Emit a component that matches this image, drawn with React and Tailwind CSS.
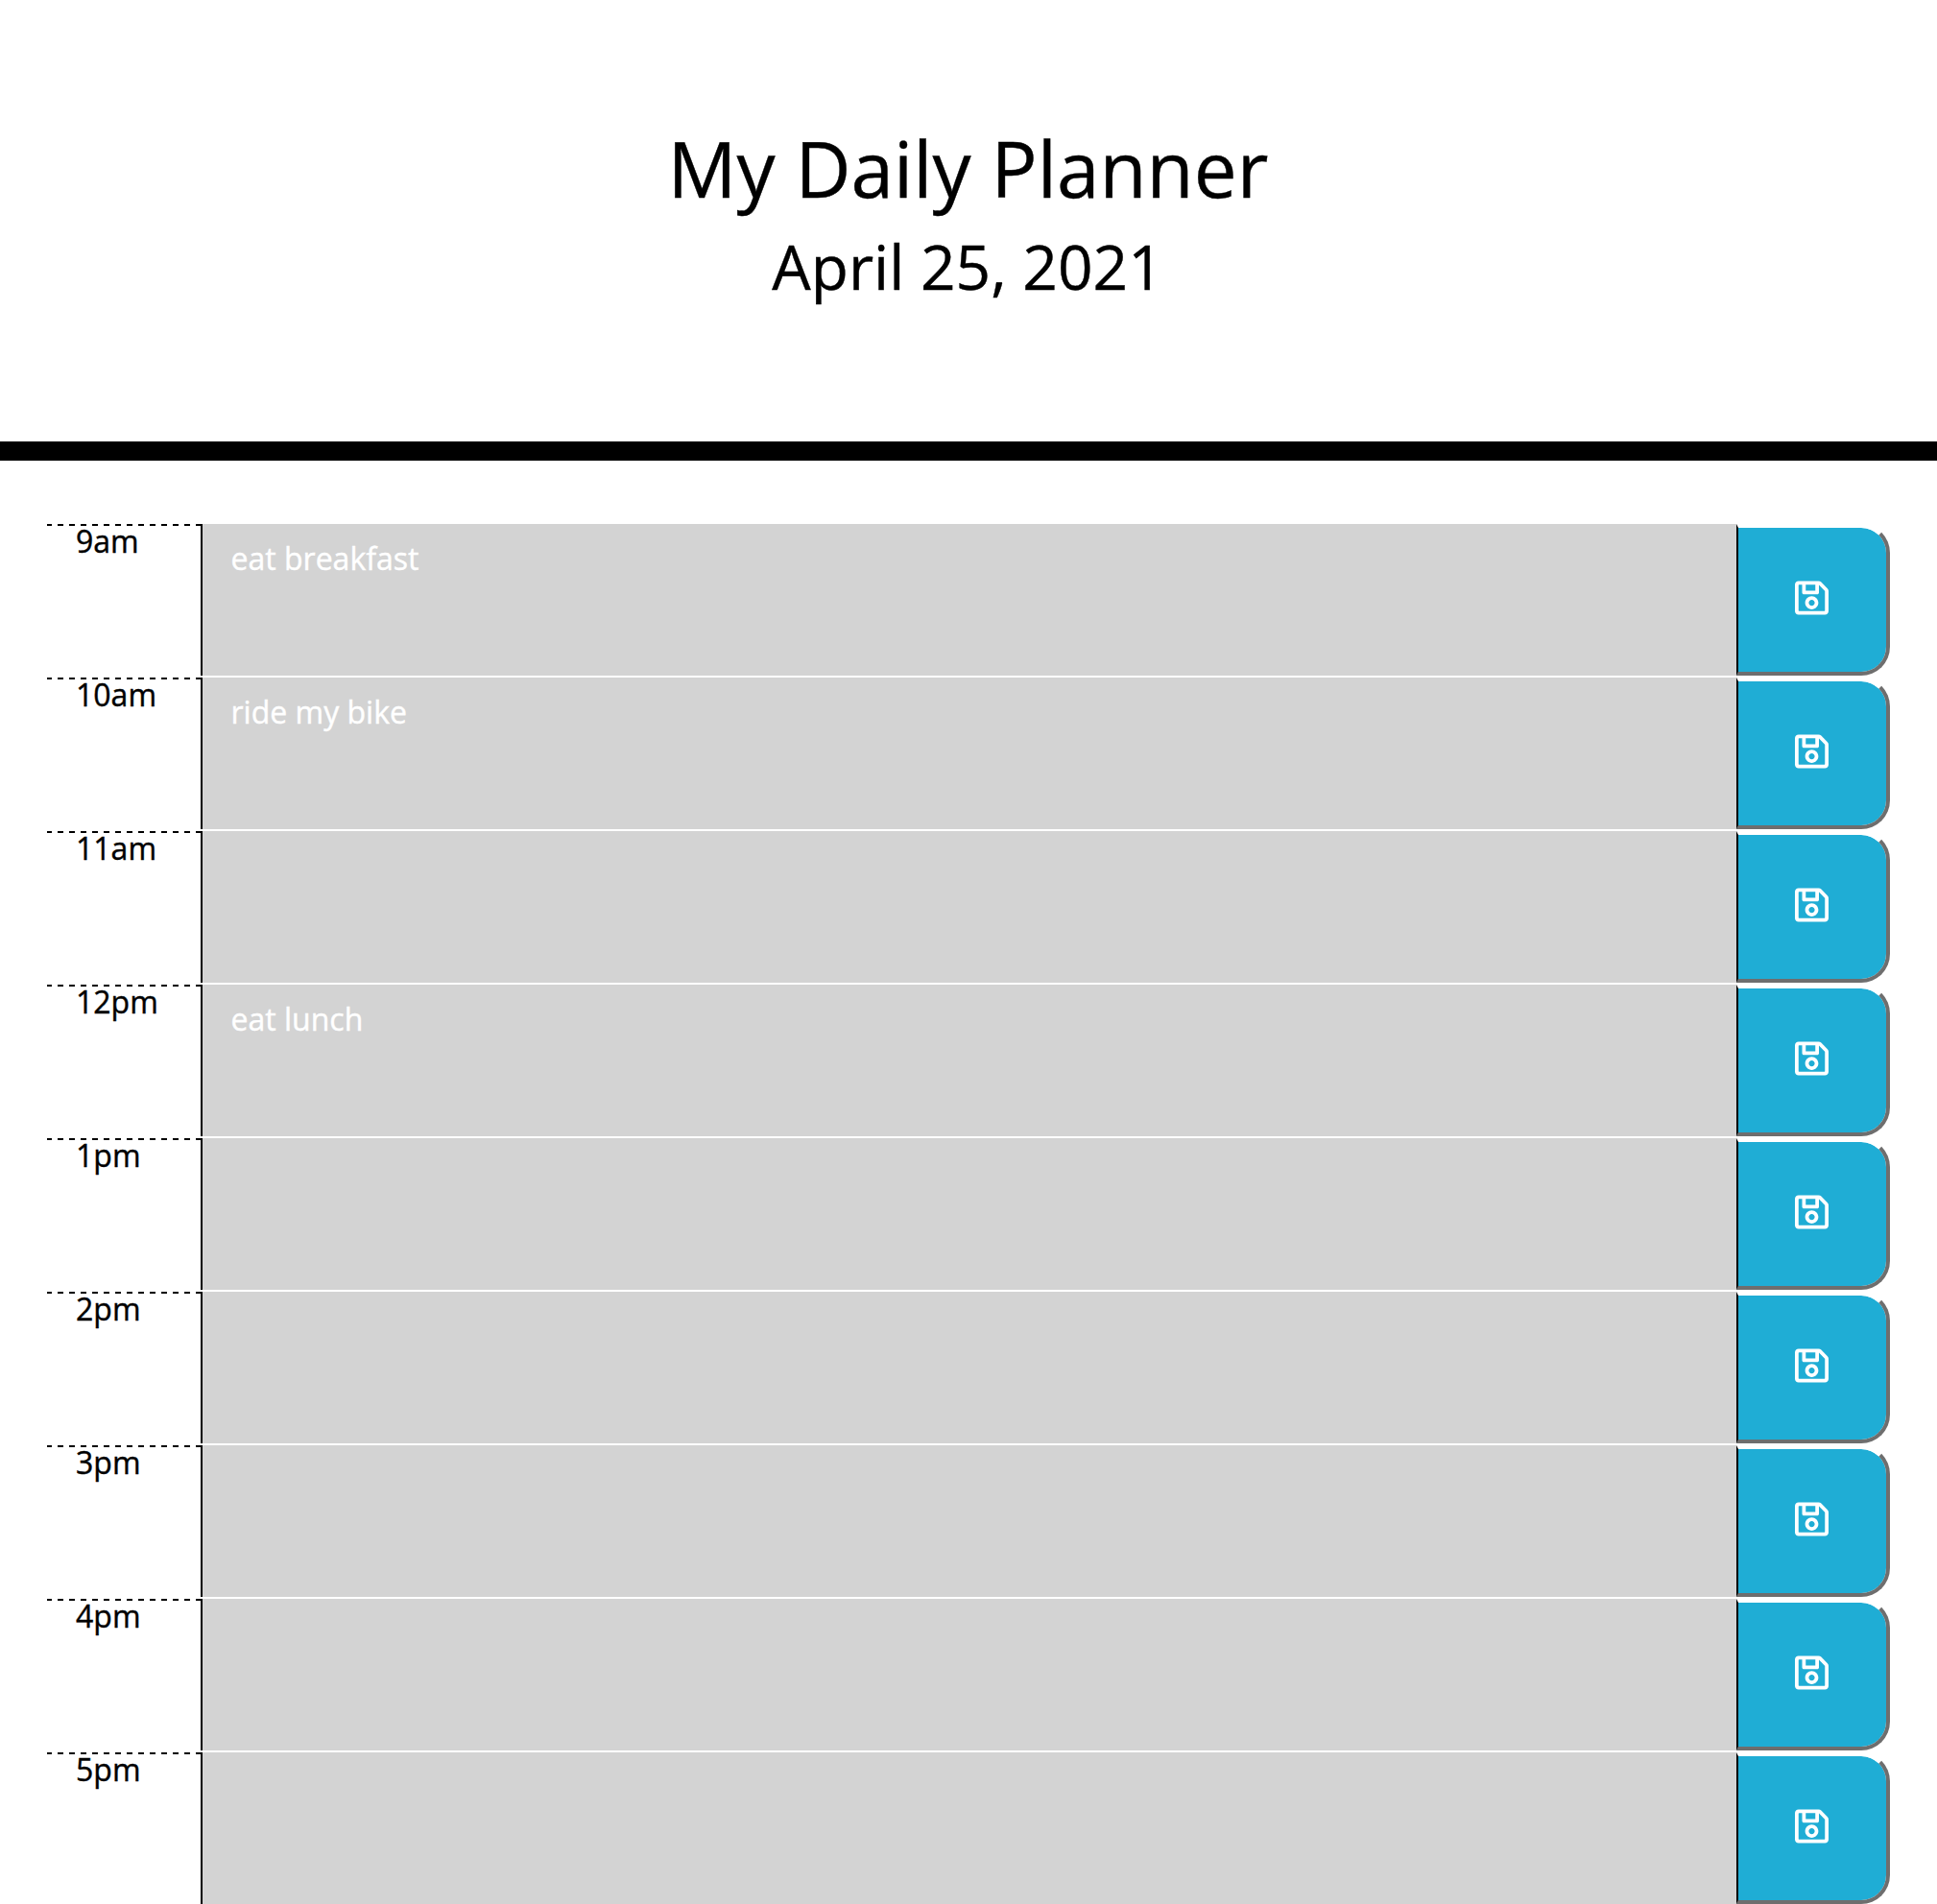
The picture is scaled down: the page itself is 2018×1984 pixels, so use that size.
import React from "react";
import { FaRegSave } from "react-icons/fa";

const slots = [
  { hour: "9am", task: "eat breakfast" },
  { hour: "10am", task: "ride my bike" },
  { hour: "11am", task: "" },
  { hour: "12pm", task: "eat lunch" },
  { hour: "1pm", task: "" },
  { hour: "2pm", task: "" },
  { hour: "3pm", task: "" },
  { hour: "4pm", task: "" },
  { hour: "5pm", task: "" },
];

function TimeBlock({ hour, task }) {
  return (
    <div className="flex h-[158px]">
      <div className="w-40 shrink-0">
        <div className="h-0.5 bg-[repeating-linear-gradient(90deg,#000_-1px_5px,transparent_5px_11px)]" />
        <div className="pl-[30px] text-[32px] leading-8 text-black">{hour}</div>
      </div>
      <div className="min-w-0 flex-1 border-l-2 border-black bg-[#d3d3d3] pr-[30px] pl-[29.5px] pt-3 text-[32px] leading-[48px] text-white">
        {task}
      </div>
      <button
        aria-label={"Save " + hour}
        className="flex w-40 shrink-0 items-center justify-center rounded-r-[30px] border-4 border-l-2 border-t-white border-r-[#6e6e6e] border-b-[#6e6e6e] border-l-black bg-[#1fadd5] bg-clip-padding pr-px pb-1 text-white"
      >
        <FaRegSave className="h-10 w-[35px]" />
      </button>
    </div>
  );
}

export default function App() {
  return (
    <div className="h-[1984px] overflow-hidden bg-white font-['Open_Sans','Noto_Sans',sans-serif] text-black [-webkit-text-stroke:0.4px_currentColor]">
      <header className="flex h-[480px] flex-col items-center border-b-20 border-black pt-[127px] pr-px text-center">
        <h1 className="text-[80px] leading-24 tracking-[0.05px]">My Daily Planner</h1>
        <p className="mt-[7px] pr-px text-[64px] leading-24">April 25, 2021</p>
      </header>
      <main className="ml-[49px] mt-[66px] flex w-[1920px] flex-col gap-0.5">
        {slots.map((s) => (
          <TimeBlock key={s.hour} {...s} />
        ))}
      </main>
    </div>
  );
}
